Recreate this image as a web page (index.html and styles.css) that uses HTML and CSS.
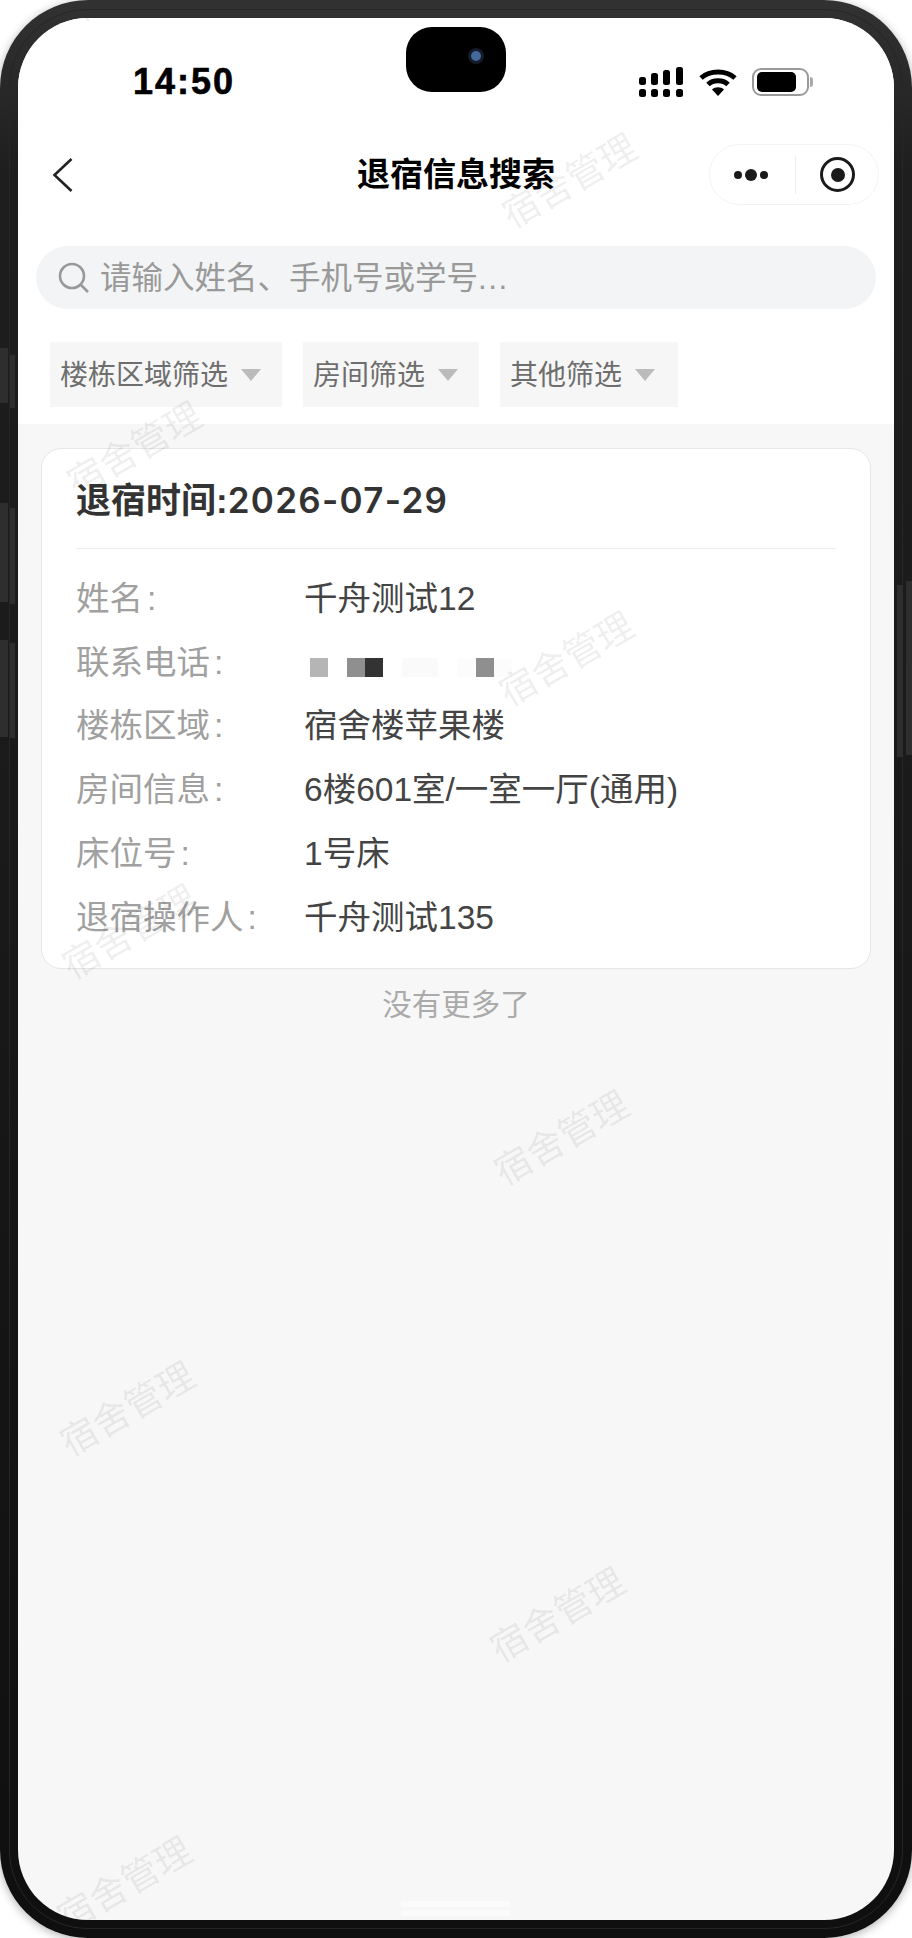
FILE: index.html
```html
<!DOCTYPE html>
<html lang="zh-CN">
<head>
    <meta charset="UTF-8">
    <meta name="viewport" content="width=device-width, initial-scale=1.0">
    <title>退宿信息搜索</title>
    <link rel="stylesheet" href="styles.css">
</head>
<body>
    <div class="phone">
        <span class="key key1"></span>
        <span class="key key2"></span>
        <span class="key key3"></span>
        <span class="key key4"></span>
        <span class="key key5"></span>
        <span class="key key6"></span>
        <span class="key key7"></span>
        <span class="key key8"></span>
        <div class="screen">
            <div class="top">
                <div class="status">
                    <span class="time">14:50</span>
                    <div class="status-icons">
                        <svg class="signal" width="44" height="30" viewBox="0 0 44 30">
                            <rect x="0" y="10" width="7" height="8" rx="2.5" />
                            <rect x="12" y="6" width="7" height="12" rx="2.5" />
                            <rect x="24" y="3" width="7" height="15" rx="2.5" />
                            <rect x="37" y="0" width="7" height="18" rx="2.5" />
                            <rect x="0" y="22" width="7" height="8" rx="2.5" />
                            <rect x="12" y="22" width="7" height="8" rx="2.5" />
                            <rect x="24" y="22" width="7" height="8" rx="2.5" />
                            <rect x="37" y="22" width="7" height="8" rx="2.5" />
                        </svg>
                        <svg class="wifi" width="38" height="28" viewBox="0 0 38 28">
                            <path d="M2 10C11 2 27 2 36 10" fill="none" stroke="#000" stroke-width="5" />
                            <path d="M9 16.500C14 11.500 24 11.500 29 16.500" fill="none" stroke="#000" stroke-width="5" />
                            <path d="M13 21.500C16 18.500 22 18.500 25 21.500L19 28Z" />
                        </svg>
                        <div class="battery"><i></i></div>
                    </div>
                </div>
                <div class="island"><i></i></div>
                <div class="nav">
                    <svg class="back" width="22" height="36" viewBox="0 0 22 36">
                        <path d="M19.500 2L2.500 18L19.500 34" fill="none" stroke="#222" stroke-width="2.6" />
                    </svg>
                    <h1>退宿信息搜索</h1>
                    <div class="capsule">
                        <div class="dots"><i></i><b></b><i></i></div>
                        <span class="line"></span>
                        <div class="target"><i></i></div>
                    </div>
                </div>
                <div class="search">
                    <svg width="32" height="32" viewBox="0 0 32 32">
                        <circle cx="14" cy="14" r="12" fill="none" stroke="#999" stroke-width="2.6" />
                        <path d="M23 23L30 30" fill="none" stroke="#999" stroke-width="2.6" />
                    </svg>
                    <span>请输入姓名、手机号或学号<em>...</em></span>
                </div>
                <div class="filters">
                    <div class="chip chip1">楼栋区域筛选<i></i></div>
                    <div class="chip chip2">房间筛选<i></i></div>
                    <div class="chip chip3">其他筛选<i></i></div>
                </div>
            </div>
            <div class="list">
                <div class="card">
                    <div class="card-title">退宿时间:<span>2026-07-29</span></div>
                    <div class="rows">
                        <p><label>姓名<em>:</em></label><span>千舟测试12</span></p>
                        <p>
                            <label>联系电话<em>:</em></label>
                            <span class="blur">
                                <i class="c1"></i><i class="c0"></i><i class="c2"></i><i class="c3"></i><i class="c0"></i><i class="c4"></i><i class="c4"></i><i class="c0"></i><i class="c5"></i><i class="c2"></i><i class="c5"></i>
                            </span>
                        </p>
                        <p><label>楼栋区域<em>:</em></label><span>宿舍楼苹果楼</span></p>
                        <p><label>房间信息<em>:</em></label><span>6楼601室/一室一厅(通用)</span></p>
                        <p><label>床位号<em>:</em></label><span>1号床</span></p>
                        <p><label>退宿操作人<em>:</em></label><span>千舟测试135</span></p>
                    </div>
                </div>
                <div class="nomore">没有更多了</div>
            </div>
            <div class="home"><i></i><i></i></div>
            <div class="mark m1">宿舍管理</div>
            <div class="mark m2">宿舍管理</div>
            <div class="mark m3">宿舍管理</div>
            <div class="mark m4">宿舍管理</div>
            <div class="mark m5">宿舍管理</div>
            <div class="mark m6">宿舍管理</div>
            <div class="mark m7">宿舍管理</div>
            <div class="mark m8">宿舍管理</div>
            <div class="mark m9">宿舍管理</div>
        </div>
    </div>
</body>
</html>
```

FILE: styles.css
```css
*{
    padding: 0;
    margin: 0;
    box-sizing: border-box;
}
html,body{
    height: 100%;
    background-color: #fff;
}
body{
    font-family: "Liberation Sans", "Noto Sans CJK SC", sans-serif;
    overflow: hidden;
}
i{
    display: block;
}
em{
    font-style: normal;
}
/* 手机外壳 */
.phone{
    position: relative;
    height: 1938px;
    padding: 18px;
    border-radius: 88px;
    background: linear-gradient(#323232, #1e1e1e 9%, #1a1a1a 40%, #0f0f0f 100%);
    box-shadow: 0 2px 10px rgba(0, 0, 0, 0.3);
}
.phone::before{
    content: "";
    position: absolute;
    top: 9px;
    left: 9px;
    right: 9px;
    bottom: 9px;
    border: 1px solid #262626;
    border-radius: 79px;
}
.key{
    position: absolute;
    background-color: #2e2e2e;
}
.key1{
    left: 0;
    top: 348px;
    width: 8px;
    height: 55px;
}
.key2{
    left: 10px;
    top: 355px;
    width: 5px;
    height: 53px;
}
.key3{
    left: 0;
    top: 503px;
    width: 8px;
    height: 99px;
}
.key4{
    left: 10px;
    top: 508px;
    width: 5px;
    height: 96px;
}
.key5{
    left: 0;
    top: 640px;
    width: 8px;
    height: 97px;
}
.key6{
    left: 10px;
    top: 643px;
    width: 5px;
    height: 95px;
}
.key7{
    right: 9px;
    top: 585px;
    width: 6px;
    height: 172px;
}
.key8{
    right: 0;
    top: 581px;
    width: 6px;
    height: 174px;
}
.screen{
    position: relative;
    height: 100%;
    border-radius: 70px;
    overflow: hidden;
    background-color: #f7f7f7;
    display: flex;
    flex-direction: column;
}
.top{
    height: 406px;
    background-color: #fff;
    flex: none;
}
/* 状态栏 */
.status{
    height: 100px;
    padding: 50px 0 0 115px;
    display: flex;
    justify-content: space-between;
    align-items: flex-start;
}
.time{
    font-size: 36px;
    line-height: 28px;
    font-weight: 700;
    letter-spacing: 2px;
    color: #000;
    -webkit-text-stroke: 0.6px #000;
}
.status-icons{
    display: flex;
    align-items: center;
    margin: -1px 85px 0 0;
}
.signal{
    margin-right: 16px;
}
.wifi{
    margin-right: 15px;
}
.battery{
    position: relative;
    width: 57px;
    height: 28px;
    border: 2px solid #9a9a9a;
    border-radius: 9px;
    padding: 2px 3px;
}
.battery i{
    width: 39px;
    height: 20px;
    border-radius: 5px;
    background-color: #000;
}
.battery::after{
    content: "";
    position: absolute;
    right: -6px;
    top: 7px;
    width: 3px;
    height: 10px;
    border-radius: 0 3px 3px 0;
    background-color: #a8a8a8;
}
.island{
    position: absolute;
    left: 388px;
    top: 9px;
    width: 100px;
    height: 65px;
    border-radius: 26px;
    background-color: #000;
}
.island i{
    width: 16px;
    height: 16px;
    margin: 21px 0 0 62px;
    border-radius: 50%;
    background-color: #44689a;
    border: 3px solid #141b2a;
}
/* 导航栏 */
.nav{
    position: relative;
    height: 100px;
    display: flex;
    align-items: center;
    justify-content: center;
    padding-top: 14px;
}
.back{
    position: absolute;
    left: 34px;
    top: 39px;
}
.nav h1{
    font-size: 33px;
    line-height: 50px;
    font-weight: 700;
    color: #000;
}
.capsule{
    position: absolute;
    left: 691px;
    top: 26px;
    width: 170px;
    height: 61px;
    border: 1px solid #f3f3f3;
    border-radius: 31px;
    display: flex;
    align-items: center;
}
.dots{
    width: 85px;
    padding-left: 24px;
    display: flex;
    align-items: center;
    gap: 3px;
}
.dots i{
    width: 8px;
    height: 8px;
    border-radius: 50%;
    background-color: #1a1a1a;
}
.dots b{
    display: block;
    width: 12px;
    height: 12px;
    border-radius: 50%;
    background-color: #1a1a1a;
}
.line{
    width: 1px;
    height: 38px;
    background-color: #eee;
}
.target{
    width: 35px;
    height: 35px;
    margin-left: 24px;
    border: 3.5px solid #1a1a1a;
    border-radius: 50%;
    display: flex;
    align-items: center;
    justify-content: center;
}
.target i{
    width: 14px;
    height: 14px;
    border-radius: 50%;
    background-color: #1a1a1a;
}
/* 搜索框 */
.search{
    height: 63px;
    margin: 28px 18px 0;
    padding-left: 22px;
    border-radius: 32px;
    background-color: #f3f4f5;
    display: flex;
    align-items: center;
    gap: 10px;
}
.search span{
    font-size: 31.5px;
    line-height: 40px;
    padding-bottom: 0;
    color: #999;
}
.search em{
    letter-spacing: 1.5px;
}
/* 筛选 */
.filters{
    margin: 33px 0 0 32px;
    display: flex;
    gap: 21px;
}
.chip{
    height: 65px;
    padding: 0 0 4px 10px;
    background-color: #f6f6f6;
    font-size: 28px;
    color: #6e6e6e;
    display: flex;
    align-items: center;
}
.chip1{
    width: 232px;
}
.chip2{
    width: 176px;
}
.chip3{
    width: 178px;
}
.chip i{
    width: 0;
    height: 0;
    margin: 4px 0 0 13px;
    border-top: 12px solid #bbb;
    border-left: 10.5px solid transparent;
    border-right: 10.5px solid transparent;
}
/* 列表 */
.list{
    flex: 1;
    padding: 24px 23px 0;
}
.card{
    height: 521px;
    padding: 0 34px 0 34px;
    background-color: #fff;
    border: 1px solid #e6e6e6;
    border-radius: 20px;
}
.card-title{
    height: 100px;
    line-height: 102px;
    font-size: 35px;
    font-weight: 700;
    color: #333;
    border-bottom: 1px solid #ececec;
}
.card-title span{
    font-family: Inter, "Liberation Sans", sans-serif;
    font-weight: 600;
    letter-spacing: 1.3px;
}
.rows{
    padding-top: 14.5px;
}
.rows p{
    height: 63.8px;
    display: flex;
    align-items: center;
    font-size: 33.5px;
    color: #444;
}
.rows label{
    width: 228px;
    flex: none;
    color: #a0a0a0;
}
.rows em{
    margin-left: 4px;
}
.blur{
    display: flex;
    height: 19px;
    margin: 16px 0 0 6px;
}
.blur i{
    width: 18px;
    height: 19px;
    margin-right: 0.4px;
}
.c0{
    background-color: #fff;
}
.c1{
    background-color: #b5b5b5;
}
.c2{
    background-color: #8f8f8f;
}
.c3{
    background-color: #333;
}
.c4{
    background-color: #fafafa;
}
.c5{
    background-color: #fcfcfc;
}
.nomore{
    margin-top: 15.5px;
    text-align: center;
    font-size: 29.5px;
    line-height: 40px;
    color: #aaa;
}
.home{
    position: absolute;
    left: 383px;
    bottom: 4px;
    width: 109px;
}
.home i{
    height: 6px;
    margin-top: 3px;
    background-color: #fbfbfb;
}
/* 水印 */
.mark{
    position: absolute;
    width: 170px;
    margin: -25px 0 0 -85px;
    line-height: 50px;
    text-align: center;
    font-size: 37px;
    color: rgba(0, 0, 0, 0.08);
    transform: rotate(-30deg);
    pointer-events: none;
}
.m1{
    left: 120px;
    top: -43px;
}
.m2{
    left: 552px;
    top: 164px;
}
.m3{
    left: 117px;
    top: 432px;
}
.m4{
    left: 549px;
    top: 642px;
}
.m5{
    left: 112px;
    top: 915px;
}
.m6{
    left: 544px;
    top: 1121px;
}
.m7{
    left: 110px;
    top: 1392px;
}
.m8{
    left: 540px;
    top: 1598px;
}
.m9{
    left: 107px;
    top: 1867px;
}
```
